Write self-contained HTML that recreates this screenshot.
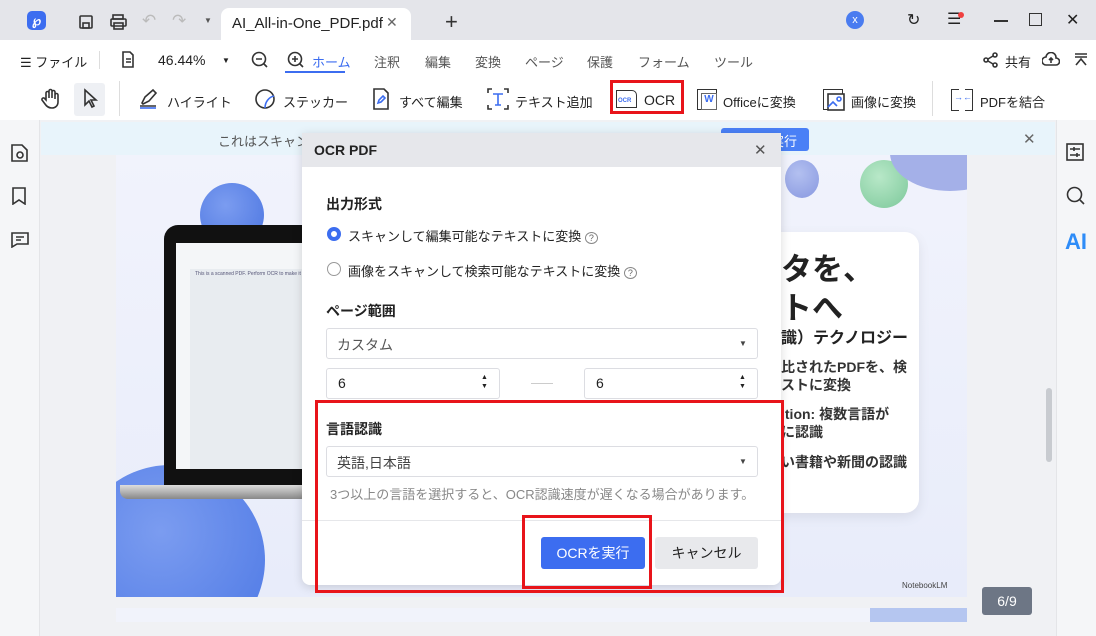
<!DOCTYPE html>
<html><head><meta charset="utf-8"><style>
*{margin:0;padding:0;box-sizing:border-box}
html,body{width:1096px;height:636px;overflow:hidden}
body{font-family:"Liberation Sans","Noto Sans CJK JP",sans-serif;background:#f0f1f4;position:relative;color:#222}
.a{position:absolute}
.t{font-size:13px;white-space:nowrap}
svg{position:absolute;fill:none;stroke:#333;stroke-width:1.6}
</style></head><body>
<!-- title bar -->
<div class="a" style="left:0;top:0;width:1096px;height:40px;background:#e4e5ea"></div>
<div class="a" style="left:27px;top:11px;width:19px;height:19px;border-radius:5px;background:#3c6df0;color:#fff;font-size:13px;text-align:center;line-height:19px;font-weight:bold">℘</div>
<svg style="left:78px;top:14px" width="16" height="16" stroke="#bbb"><rect x="2" y="2" width="12" height="12" rx="1"/><rect x="5" y="9" width="6" height="5"/></svg>
<svg style="left:110px;top:14px" width="18" height="16"><rect x="3" y="1" width="10" height="4"/><rect x="1" y="5" width="15" height="7" rx="1"/><rect x="4" y="9" width="9" height="6"/></svg>
<div class="a t" style="left:142px;top:11px;color:#bbb;font-size:17px">↶</div>
<div class="a t" style="left:172px;top:11px;color:#bbb;font-size:17px">↷</div>
<div class="a t" style="left:204px;top:16px;font-size:8px;color:#555">▼</div>
<div class="a" style="left:221px;top:8px;width:190px;height:32px;background:#fff;border-radius:8px 8px 0 0"></div>
<div class="a t" style="left:232px;top:15px;font-size:15px">AI_All-in-One_PDF.pdf</div>
<div class="a t" style="left:386px;top:14px;font-size:14px;color:#666">✕</div>
<div class="a t" style="left:445px;top:9px;font-size:22px;color:#333">+</div>
<div class="a" style="left:846px;top:11px;width:18px;height:18px;border-radius:50%;background:#4a7cf0;color:#fff;font-size:11px;text-align:center;line-height:18px">x</div>
<div class="a t" style="left:907px;top:10px;font-size:16px">↻</div>
<div class="a t" style="left:947px;top:9px;font-size:16px">☰</div>
<div class="a" style="left:958px;top:12px;width:6px;height:6px;border-radius:50%;background:#f04040"></div>
<div class="a" style="left:994px;top:20px;width:14px;height:1.5px;background:#333"></div>
<div class="a" style="left:1029px;top:13px;width:13px;height:13px;border:1.5px solid #333"></div>
<div class="a t" style="left:1066px;top:10px;font-size:16px">✕</div>
<!-- menu row -->
<div class="a" style="left:0;top:40px;width:1096px;height:80px;background:#fff"></div>
<div class="a t" style="left:20px;top:52px">☰ ファイル</div>
<div class="a" style="left:99px;top:51px;width:1px;height:18px;background:#ddd"></div>
<svg style="left:121px;top:51px" width="14" height="18"><path d="M2 1h7l3 3v12H2z M5 8h5 M5 11h5"/></svg>
<div class="a t" style="left:158px;top:52px;font-size:14px">46.44%</div>
<div class="a t" style="left:222px;top:56px;font-size:8px">▼</div>
<svg style="left:251px;top:51px" width="18" height="18"><circle cx="8" cy="8" r="6.5"/><path d="M5 8h6 M13 13l3 3"/></svg>
<svg style="left:287px;top:51px" width="18" height="18"><circle cx="8" cy="8" r="6.5"/><path d="M5 8h6 M8 5v6 M13 13l3 3"/></svg>
<div class="a t" style="left:312px;top:52px;color:#3c6df0">ホーム</div>
<div class="a" style="left:285px;top:71px;width:60px;height:2px;background:#3c6df0"></div>
<div class="a t" style="left:374px;top:52px;color:#555">注釈</div>
<div class="a t" style="left:425px;top:52px;color:#555">編集</div>
<div class="a t" style="left:475px;top:52px;color:#555">変換</div>
<div class="a t" style="left:525px;top:52px;color:#555">ページ</div>
<div class="a t" style="left:587px;top:52px;color:#555">保護</div>
<div class="a t" style="left:638px;top:52px;color:#555">フォーム</div>
<div class="a t" style="left:714px;top:52px;color:#555">ツール</div>
<svg style="left:983px;top:52px" width="16" height="16"><circle cx="12" cy="3" r="2"/><circle cx="3" cy="8" r="2"/><circle cx="12" cy="13" r="2"/><path d="M5 7l5-3 M5 9l5 3"/></svg>
<div class="a t" style="left:1005px;top:52px">共有</div>
<svg style="left:1042px;top:52px" width="18" height="14"><path d="M4 13a4 4 0 0 1 0-8a5 5 0 0 1 10 1a3.5 3.5 0 0 1 0 7z M9 11V6 M7 8l2-2 2 2"/></svg>
<svg style="left:1074px;top:52px" width="14" height="14" stroke="#555" stroke-width="1.2"><path d="M1 2h12 M1 5h12 M2 13l5-6 5 6"/></svg>
<!-- toolbar -->
<svg style="left:40px;top:88px" width="22" height="22"><path d="M6 12V5a1.5 1.5 0 0 1 3 0v5V3a1.5 1.5 0 0 1 3 0v7V4a1.5 1.5 0 0 1 3 0v7V7a1.5 1.5 0 0 1 3 0v7c0 4-3 6-6 6s-5-1-7-4l-3-4a1.5 1.5 0 0 1 3-1z"/></svg>
<div class="a" style="left:74px;top:83px;width:31px;height:33px;background:#eef0f4;border-radius:3px"></div>
<svg style="left:83px;top:88px" width="16" height="22"><path d="M2 2l11 10h-5l3 6-2 1-3-6-4 4z"/></svg>
<div class="a" style="left:119px;top:81px;width:1px;height:35px;background:#ddd"></div>
<svg style="left:138px;top:88px" width="22" height="22"><path d="M4 15l3-6 8-7 3 3-7 8-6 3z M2 18h16" /><path d="M2 20h16" stroke="#3c6df0"/></svg>
<div class="a t" style="left:167px;top:92px">ハイライト</div>
<svg style="left:255px;top:88px" width="22" height="22"><circle cx="10" cy="11" r="9"/><path d="M10 20c0-6 4-11 9-12" stroke="#3c6df0"/></svg>
<div class="a t" style="left:283px;top:92px">ステッカー</div>
<svg style="left:372px;top:88px" width="18" height="22"><path d="M2 1h10l4 4v16H2z"/><path d="M6 15l1-3 4-4 2 2-4 4z" stroke="#3c6df0"/></svg>
<div class="a t" style="left:399px;top:92px">すべて編集</div>
<svg style="left:487px;top:88px" width="22" height="22"><path d="M1 5V1h4 M17 1h4v4 M1 17v4h4 M21 17v4h-4"/><path d="M6 6h10 M11 6v11 M8 17h6" stroke="#3c6df0"/></svg>
<div class="a t" style="left:515px;top:92px">テキスト追加</div>
<div class="a" style="left:610px;top:80px;width:74px;height:34px;border:3px solid #e8141a"></div>
<div class="a" style="left:616px;top:90px;width:21px;height:18px;border:1.5px solid #333;border-radius:0 5px 0 0"></div>
<div class="a" style="left:618px;top:98px;font-size:6px;font-weight:bold;color:#3c6df0">OCR</div>
<div class="a t" style="left:644px;top:92px;font-size:14px">OCR</div>
<div class="a" style="left:697px;top:89px;width:20px;height:21px;border:1.5px solid #333"></div>
<div class="a" style="left:701px;top:93px;width:16px;height:17px;border:1px solid #666;color:#3c6df0;font-size:10px;text-align:center;font-weight:bold;background:#fff">W</div>
<div class="a t" style="left:723px;top:92px">Officeに変換</div>
<div class="a" style="left:823px;top:89px;width:20px;height:21px;border:1.5px solid #333"></div>
<svg style="left:827px;top:93px" width="18" height="18" stroke-width="1.4"><rect x="1" y="1" width="16" height="16" fill="#fff"/><path d="M1 14l5-5 4 4" stroke="#3c6df0"/><circle cx="12" cy="6" r="2" stroke="#3c6df0"/></svg>
<div class="a t" style="left:851px;top:92px">画像に変換</div>
<div class="a" style="left:932px;top:81px;width:1px;height:35px;background:#ddd"></div>
<div class="a" style="left:951px;top:89px;width:22px;height:22px;border:1.5px solid #333"></div>
<div class="a" style="left:959px;top:86px;width:6px;height:28px;background:#fff"></div>
<div class="a t" style="left:954px;top:92px;font-size:9px;color:#3c6df0">→←</div>
<div class="a t" style="left:980px;top:92px">PDFを結合</div>
<!-- sidebars -->
<div class="a" style="left:0;top:120px;width:40px;height:516px;background:#f5f6f8;border-right:1px solid #e4e5e8"></div>
<div class="a" style="left:1056px;top:120px;width:40px;height:516px;background:#f5f6f8;border-left:1px solid #e4e5e8"></div>
<svg style="left:11px;top:144px" width="17" height="18"><path d="M1 1h10l5 5v11H1z"/><circle cx="9" cy="11" r="3"/></svg>
<svg style="left:12px;top:187px" width="14" height="18"><path d="M1 1h12v16l-6-4-6 4z"/></svg>
<svg style="left:11px;top:232px" width="18" height="16"><path d="M1 1h16v11H6l-5 3z M5 5h8 M5 8h5"/></svg>
<svg style="left:1066px;top:143px" width="18" height="18"><rect x="1" y="1" width="16" height="16"/><path d="M4 6h10 M4 12h10 M8 4v4 M11 10v4"/></svg>
<svg style="left:1066px;top:186px" width="20" height="20"><circle cx="8.5" cy="8.5" r="7"/><path d="M14 14l4 4"/></svg>
<div class="a" style="left:1065px;top:229px;font-size:22px;font-weight:bold;color:#2e8cf8">AI</div>
<!-- page -->
<div class="a" style="left:116px;top:155px;width:851px;height:442px;background:linear-gradient(180deg,#f1f3fc,#e8ecfa);overflow:hidden">
 <div class="a" style="left:84px;top:28px;width:64px;height:64px;border-radius:50%;background:radial-gradient(circle at 40% 35%,#7b9cf0,#4a74e0)"></div>
 <div class="a" style="left:-41px;top:310px;width:190px;height:190px;border-radius:50%;background:radial-gradient(circle at 45% 35%,#7b9cf0,#4a76e4)"></div>
 <div class="a" style="left:48px;top:70px;width:160px;height:260px;background:#111;border-radius:14px 0 0 0"></div>
 <div class="a" style="left:60px;top:88px;width:150px;height:226px;background:#f4f6f8"></div>
 <div class="a" style="left:74px;top:114px;width:136px;height:200px;background:#e8ecf0"></div>
 <div class="a" style="left:4px;top:330px;width:200px;height:14px;background:linear-gradient(#ddd,#888);border-radius:0 0 8px 8px"></div>
 <div class="a t" style="left:79px;top:116px;font-size:5px;color:#557">This is a scanned PDF. Perform OCR to make it</div>
 <div class="a" style="left:669px;top:5px;width:34px;height:38px;border-radius:50%;background:radial-gradient(circle at 40% 35%,#b3c0f0,#8898e0)"></div>
 <div class="a" style="left:744px;top:5px;width:48px;height:48px;border-radius:50%;background:radial-gradient(circle at 40% 35%,#b8e8c8,#7cc89a)"></div>
 <div class="a" style="left:774px;top:-40px;width:120px;height:76px;border-radius:50%;background:#a4b0e8"></div>
 <div class="a" style="left:614px;top:77px;width:189px;height:281px;background:#fff;border-radius:14px;box-shadow:0 4px 12px rgba(0,0,0,.08)"></div>
 <div class="a" style="left:665px;top:95px;font-size:31px;font-weight:bold;line-height:39px">タを、<br>トへ</div>
 <div class="a t" style="left:665px;top:169px;font-size:16px;font-weight:bold">識）テクノロジー</div>
 <div class="a" style="left:665px;top:203px;font-size:14px;font-weight:bold;line-height:18px;color:#333">比されたPDFを、検<br>ストに変換</div>
 <div class="a" style="left:665px;top:250px;font-size:14px;font-weight:bold;line-height:18px;color:#333">ition: 複数言語が<br>に認識</div>
 <div class="a t" style="left:665px;top:297px;font-size:14px;font-weight:bold;color:#333">い書籍や新聞の認識</div>
 <div class="a t" style="left:786px;top:426px;font-size:8px;color:#444">NotebookLM</div>
</div>
<div class="a" style="left:116px;top:608px;width:851px;height:14px;background:#f1f3fb"></div>
<div class="a" style="left:870px;top:608px;width:97px;height:14px;background:#b5c6f0"></div>
<div class="a" style="left:982px;top:587px;width:50px;height:28px;background:#6d7685;border-radius:3px;color:#fff;font-size:14px;text-align:center;line-height:28px">6/9</div>
<div class="a" style="left:1046px;top:388px;width:6px;height:74px;background:#c8cbd0;border-radius:3px"></div>
<!-- notification -->
<div class="a" style="left:41px;top:122px;width:1014px;height:33px;background:#e8f4fb"></div>
<div class="a t" style="left:218px;top:131px;color:#555">これはスキャン</div>
<div class="a" style="left:721px;top:128px;width:88px;height:23px;background:#4a80f6;border-radius:3px;color:#fff;font-size:13px;text-align:right;padding:3px 12px 0 0">実行</div>
<div class="a t" style="left:1023px;top:130px;font-size:15px;color:#666">✕</div>
<!-- dialog -->
<div class="a" style="left:302px;top:133px;width:479px;height:452px;background:#fff;border-radius:0 0 8px 8px;box-shadow:0 2px 10px rgba(0,0,0,.15)"></div>
<div class="a" style="left:302px;top:133px;width:479px;height:34px;background:#e6e7eb"></div>
<div class="a t" style="left:314px;top:142px;font-weight:bold;font-size:14px">OCR PDF</div>
<div class="a t" style="left:754px;top:141px;font-size:15px;color:#555">✕</div>
<div class="a t" style="left:326px;top:194px;font-weight:bold;font-size:14px">出力形式</div>
<div class="a" style="left:327px;top:227px;width:14px;height:14px;border-radius:50%;border:4px solid #3c6df0"></div>
<div class="a t" style="left:348px;top:226px">スキャンして編集可能なテキストに変換 <span style="border:1px solid #888;border-radius:50%;font-size:9px;padding:0 3px;color:#666">?</span></div>
<div class="a" style="left:327px;top:262px;width:14px;height:14px;border-radius:50%;border:1px solid #999"></div>
<div class="a t" style="left:348px;top:261px">画像をスキャンして検索可能なテキストに変換 <span style="border:1px solid #888;border-radius:50%;font-size:9px;padding:0 3px;color:#666">?</span></div>
<div class="a t" style="left:326px;top:301px;font-weight:bold;font-size:14px">ページ範囲</div>
<div class="a" style="left:326px;top:328px;width:432px;height:31px;border:1px solid #dcdde2;border-radius:3px"></div>
<div class="a t" style="left:337px;top:335px;color:#555;font-size:14px">カスタム</div>
<div class="a t" style="left:739px;top:339px;font-size:8px;color:#444">▼</div>
<div class="a" style="left:326px;top:368px;width:174px;height:31px;border:1px solid #dcdde2;border-radius:3px"></div>
<div class="a t" style="left:338px;top:375px;font-size:14px">6</div>
<div class="a t" style="left:481px;top:373px;font-size:7px;line-height:9px">▲<br>▼</div>
<div class="a" style="left:531px;top:383px;width:22px;height:1px;background:#ccc"></div>
<div class="a" style="left:584px;top:368px;width:174px;height:31px;border:1px solid #dcdde2;border-radius:3px"></div>
<div class="a t" style="left:596px;top:375px;font-size:14px">6</div>
<div class="a t" style="left:739px;top:373px;font-size:7px;line-height:9px">▲<br>▼</div>
<div class="a t" style="left:326px;top:419px;font-weight:bold;font-size:14px">言語認識</div>
<div class="a" style="left:326px;top:446px;width:432px;height:31px;border:1px solid #dcdde2;border-radius:3px"></div>
<div class="a t" style="left:337px;top:453px;color:#444;font-size:14px">英語,日本語</div>
<div class="a t" style="left:739px;top:457px;font-size:8px;color:#444">▼</div>
<div class="a t" style="left:330px;top:484px;color:#888">3つ以上の言語を選択すると、OCR認識速度が遅くなる場合があります。</div>
<div class="a" style="left:302px;top:520px;width:479px;height:1px;background:#e6e7ea"></div>
<div class="a" style="left:541px;top:537px;width:104px;height:32px;background:#3c6df0;border-radius:3px;color:#fff;font-size:14px;text-align:center;line-height:32px">OCRを実行</div>
<div class="a" style="left:655px;top:537px;width:103px;height:32px;background:#e8e9ec;border-radius:3px;font-size:14px;text-align:center;line-height:32px">キャンセル</div>
<!-- red boxes -->
<div class="a" style="left:315px;top:400px;width:469px;height:193px;border:3px solid #e8141a"></div>
<div class="a" style="left:522px;top:515px;width:130px;height:74px;border:3px solid #e8141a"></div>
</body></html>
